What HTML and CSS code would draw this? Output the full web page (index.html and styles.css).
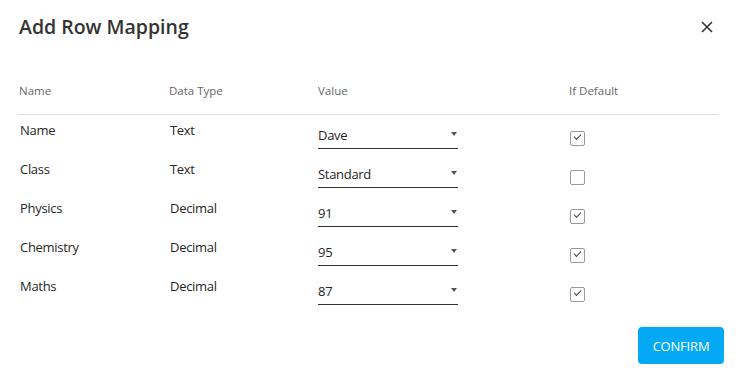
FILE: index.html
```html
<!DOCTYPE html>
<html lang="en">
<head>
    <meta charset="UTF-8">
    <meta name="viewport" content="width=device-width, initial-scale=1.0">
    <title>Add Row Mapping</title>
    <link rel="stylesheet" href="styles.css">
</head>
<body>
    <div class="dialog">
        <div class="dialog-header">
            <h2>Add Row Mapping</h2>
            <button class="close-btn" aria-label="close">
                <svg width="12" height="12" viewBox="0 0 12 12">
                    <path d="M1 1 L11 11 M11 1 L1 11" stroke="#333" stroke-width="1.6" fill="none"/>
                </svg>
            </button>
        </div>

        <div class="mapping-table">
            <div class="table-head">
                <div>Name</div>
                <div>Data Type</div>
                <div>Value</div>
                <div>If Default</div>
            </div>

            <div class="table-row">
                <div class="cell">Name</div>
                <div class="cell">Text</div>
                <div class="select"><span>Dave</span><i class="arrow"></i></div>
                <div><span class="checkbox checked"></span></div>
            </div>
            <div class="table-row">
                <div class="cell">Class</div>
                <div class="cell">Text</div>
                <div class="select"><span>Standard</span><i class="arrow"></i></div>
                <div><span class="checkbox"></span></div>
            </div>
            <div class="table-row">
                <div class="cell">Physics</div>
                <div class="cell">Decimal</div>
                <div class="select"><span>91</span><i class="arrow"></i></div>
                <div><span class="checkbox checked"></span></div>
            </div>
            <div class="table-row">
                <div class="cell">Chemistry</div>
                <div class="cell">Decimal</div>
                <div class="select"><span>95</span><i class="arrow"></i></div>
                <div><span class="checkbox checked"></span></div>
            </div>
            <div class="table-row">
                <div class="cell">Maths</div>
                <div class="cell">Decimal</div>
                <div class="select"><span>87</span><i class="arrow"></i></div>
                <div><span class="checkbox checked"></span></div>
            </div>
        </div>

        <div class="dialog-actions">
            <button class="confirm-btn">Confirm</button>
        </div>
    </div>
</body>
</html>
```

FILE: styles.css
```css
body {
    margin: 0;
    font-family: "Open Sans", "Noto Sans", sans-serif;
    background-color: #fff;
    color: #333;
}

.dialog {
    width: 738px;
    height: 373px;
    box-sizing: border-box;
    padding: 13px 14px 0 18px;
}

.dialog-header {
    display: flex;
    justify-content: space-between;
    align-items: flex-start;
}

.dialog-header h2 {
    margin: 0 0 0 1px;
    font-size: 19.5px;
    line-height: 28px;
    font-weight: 600;
    color: #333;
}

.close-btn {
    background: none;
    border: none;
    padding: 0;
    margin: 8px 11px 0 0;
    width: 12px;
    height: 12px;
    cursor: pointer;
}

.close-btn svg {
    display: block;
}

.mapping-table {
    width: 700px;
    margin-top: 42px;
}

.table-head,
.table-row {
    display: grid;
    grid-template-columns: 150px 150px 250px 1fr;
}

.table-head {
    font-size: 11.5px;
    line-height: 16px;
    color: #666;
    padding: 0 0 15px 1px;
    border-bottom: 1px solid #e0e0e0;
}

.table-head div:nth-child(3) {
    margin-left: -1px;
}

.table-row {
    height: 39px;
    font-size: 13px;
    line-height: 18px;
    color: #262626;
}

.table-row .cell {
    padding: 6px 0 0 2px;
    font-weight: 500;
    letter-spacing: -0.3px;
}

.select {
    position: relative;
    width: 140px;
    margin-top: 11px;
    height: 18px;
    padding-bottom: 4px;
    border-bottom: 1px solid #333;
    font-weight: 500;
    letter-spacing: -0.3px;
}

.arrow {
    position: absolute;
    right: 1px;
    top: 6px;
    width: 0;
    height: 0;
    border-left: 3.5px solid transparent;
    border-right: 3.5px solid transparent;
    border-top: 4px solid #555;
}

.checkbox {
    display: block;
    width: 13px;
    height: 13px;
    margin: 16px 0 0 2px;
    border: 1px solid #999;
    border-radius: 2px;
    position: relative;
}

.checkbox.checked::after {
    content: "";
    position: absolute;
    left: 3px;
    top: 2px;
    width: 6px;
    height: 3px;
    border-left: 1.5px solid #444;
    border-bottom: 1.5px solid #444;
    transform: rotate(-45deg);
}

.dialog-actions {
    display: flex;
    justify-content: flex-end;
    margin-top: 17px;
}

.confirm-btn {
    width: 86px;
    height: 37px;
    background-color: #03a9f4;
    color: #fff;
    border: none;
    border-radius: 4px;
    font-family: "Open Sans", "Noto Sans", sans-serif;
    font-size: 13px;
    text-transform: uppercase;
    letter-spacing: -0.2px;
    cursor: pointer;
}
```
